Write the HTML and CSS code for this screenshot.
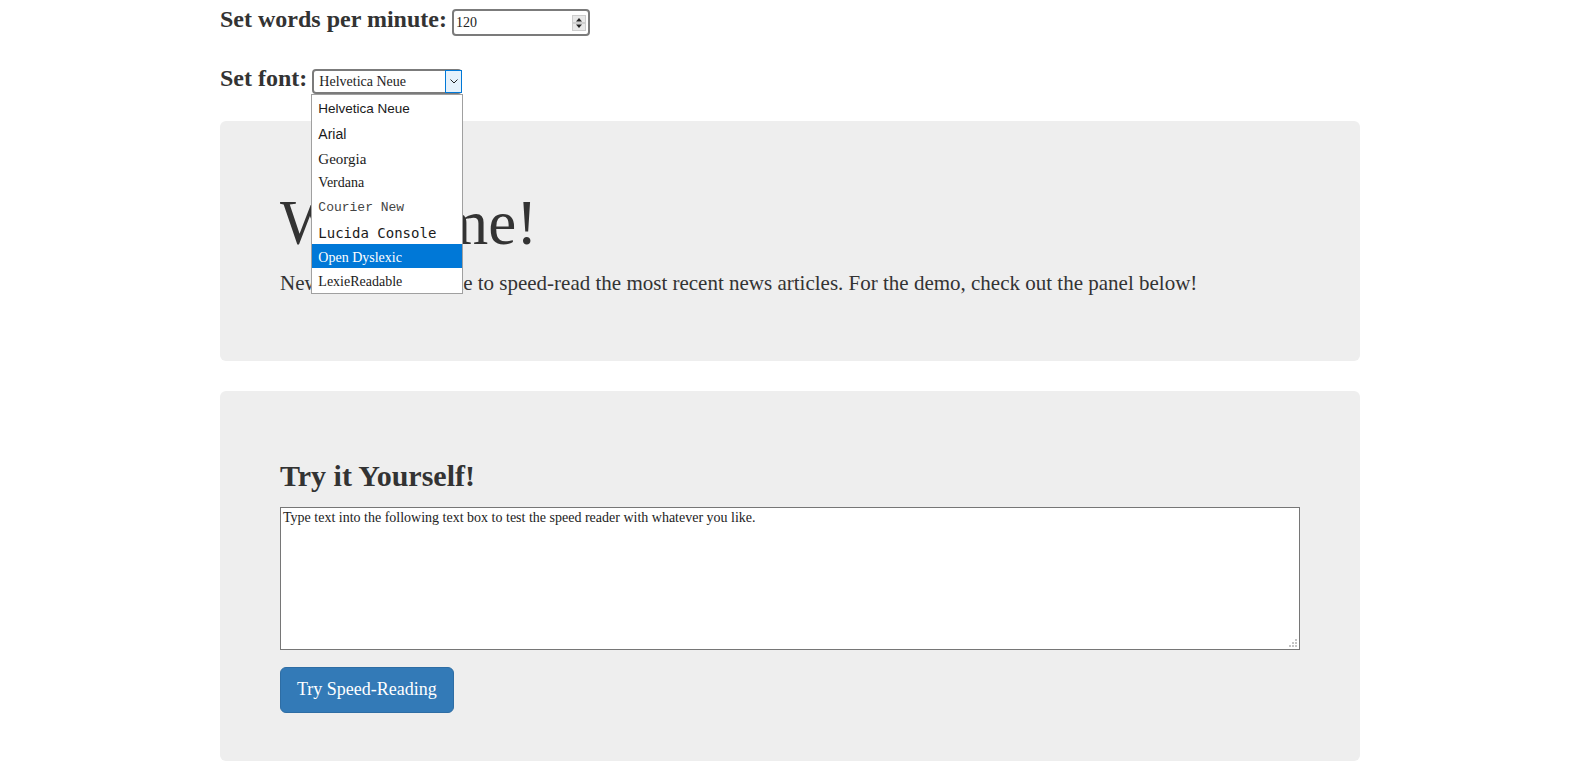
FILE: index.html
```html
<!DOCTYPE html>
<html lang="en">
<head>
<meta charset="utf-8">
<title>Speed Reader</title>
<link rel="stylesheet" href="styles.css">
</head>
<body>
<div class="container">
  <div class="setting-row setting-wpm">
    <label class="setting-label" for="wpm">Set words per minute:</label>
    <div class="num-field">
      <input class="num-input" id="wpm" type="text" value="120">
      <span class="spinner">
        <svg width="14" height="16" viewBox="0 0 14 16">
          <rect x="0.5" y="0.5" width="13" height="15" fill="#e8e8e8" stroke="#cdcdcd"/>
          <line x1="1" y1="8" x2="13" y2="8" stroke="#b5b5b5"/>
          <path d="M4 6.5h6L7 3z" fill="#222"/>
          <path d="M4 9.5h6L7 13z" fill="#222"/>
        </svg>
      </span>
    </div>
  </div>
  <div class="setting-row setting-font">
    <span class="setting-label">Set font:</span>
    <div class="select-box">
      <span class="select-value">Helvetica Neue</span>
      <span class="select-arrow">
        <svg width="8" height="5" viewBox="0 0 8 5"><polyline points="0.5,0.5 4,4 7.5,0.5" fill="none" stroke="#222" stroke-width="1"/></svg>
      </span>
      <ul class="select-menu">
        <li class="opt opt-helv">Helvetica Neue</li>
        <li class="opt opt-arial">Arial</li>
        <li class="opt opt-georgia">Georgia</li>
        <li class="opt opt-verdana">Verdana</li>
        <li class="opt opt-courier">Courier New</li>
        <li class="opt opt-lucida">Lucida Console</li>
        <li class="opt opt-serif opt-active">Open Dyslexic</li>
        <li class="opt opt-serif">LexieReadable</li>
      </ul>
    </div>
  </div>

  <div class="jumbotron">
    <h1 class="jumbo-title">Welcome!</h1>
    <p class="jumbo-text">News Hub is a website to speed-read the most recent news articles. For the demo, check out the panel below!</p>
  </div>

  <div class="jumbotron">
    <h2 class="try-title">Try it Yourself!</h2>
    <div class="text-wrap">
      <textarea class="try-text">Type text into the following text box to test the speed reader with whatever you like.</textarea>
      <span class="grip">
        <svg width="8" height="8" viewBox="0 0 8 8">
          <rect x="6" y="0" width="2" height="2" fill="#c4c4c4"/>
          <rect x="3" y="3" width="2" height="2" fill="#c4c4c4"/>
          <rect x="6" y="3" width="2" height="2" fill="#c4c4c4"/>
          <rect x="0" y="6" width="2" height="2" fill="#c4c4c4"/>
          <rect x="3" y="6" width="2" height="2" fill="#c4c4c4"/>
          <rect x="6" y="6" width="2" height="2" fill="#c4c4c4"/>
        </svg>
      </span>
    </div>
    <button class="btn-primary" type="button">Try Speed-Reading</button>
  </div>
</div>
</body>
</html>
```

FILE: styles.css
```css
* {
  box-sizing: border-box;
}

html, body {
  margin: 0;
  padding: 0;
  background: #fff;
}

body {
  font-family: "Liberation Serif", "Times New Roman", serif;
  font-size: 14px;
  line-height: 1.42857;
  color: #333;
}

.container {
  width: 1140px;
  margin: 0 auto;
  padding-top: 6px;
}

.setting-row {
  display: flex;
  align-items: baseline;
}

.setting-font {
  margin-top: 29px;
  margin-bottom: 27px;
}

.setting-label {
  font-size: 24px;
  line-height: 27px;
  font-weight: bold;
  color: #333;
}

.num-field {
  display: inline-flex;
  align-items: center;
  width: 138px;
  height: 27px;
  margin-left: 5px;
  border: 2px solid #7b7b7b;
  border-radius: 4px;
  background: #fff;
  padding: 0 2px 0 2px;
}

.num-input {
  flex: 1;
  min-width: 0;
  height: 23px;
  border: 0;
  padding: 0;
  margin: 0;
  outline: none;
  background: transparent;
  font-family: "Liberation Serif", serif;
  font-size: 14px;
  line-height: 23px;
  color: #222;
}

.spinner {
  display: flex;
  width: 14px;
  height: 16px;
}

.select-box {
  position: relative;
  display: inline-flex;
  align-items: center;
  width: 150px;
  height: 25px;
  margin-left: 5px;
  border: 2px solid #7b7b7b;
  border-radius: 4px;
  background: #fff;
}

.select-value {
  flex: 1;
  padding-left: 5px;
  font-size: 14px;
  line-height: 21px;
  color: #222;
  white-space: nowrap;
}

.select-arrow {
  display: flex;
  align-items: center;
  justify-content: center;
  align-self: stretch;
  width: 17px;
  margin: -1px -2px -1px 0;
  border: 1px solid #0078d7;
  background: #e5f1fb;
}

.select-menu {
  position: absolute;
  z-index: 5;
  top: calc(100% + 2px);
  left: -3px;
  width: 152px;
  margin: 0;
  padding: 0;
  list-style: none;
  background: #fff;
  border: 1px solid #a0a0a0;
}

.opt {
  height: 24.75px;
  line-height: 24.75px;
  padding: 2px 0 0 6px;
  color: #1a1a1a;
  font-family: "Liberation Serif", serif;
  font-size: 14px;
  white-space: nowrap;
}

.opt-helv {
  font-family: "Liberation Sans", Arial, sans-serif;
  font-size: 13.5px;
}

.opt-arial {
  font-family: "Liberation Sans", Arial, sans-serif;
  font-size: 14px;
}

.opt-georgia {
  font-size: 15px;
}

.opt-courier {
  font-family: "Liberation Mono", monospace;
  font-size: 13px;
  color: #444;
}

.opt-lucida {
  font-family: "DejaVu Sans Mono", monospace;
  font-size: 14px;
}

.opt-active {
  background: #0078d7;
  color: #fff;
}

.jumbotron {
  padding: 48px 60px;
  margin-bottom: 30px;
  background: #eee;
  border-radius: 6px;
}

.jumbo-title {
  margin: 20px 0 10px;
  font-size: 63px;
  line-height: 1.1;
  font-weight: normal;
  color: #333;
}

.jumbo-text {
  margin: 0 0 15px;
  font-size: 21px;
  line-height: 30px;
}

.try-title {
  margin: 20px 0 15px;
  font-size: 30px;
  line-height: 1.1;
  font-weight: bold;
  color: #333;
}

.text-wrap {
  position: relative;
}

.try-text {
  display: block;
  width: 100%;
  height: 143px;
  margin: 0;
  padding: 2px;
  border: 1px solid #767676;
  background: #fff;
  font-family: "Liberation Serif", serif;
  font-size: 14px;
  line-height: normal;
  color: #222;
  resize: none;
}

.grip {
  position: absolute;
  right: 3px;
  bottom: 3px;
  display: flex;
  width: 8px;
  height: 8px;
}

.btn-primary {
  display: inline-block;
  margin-top: 17px;
  padding: 10px 16px;
  font-family: "Liberation Serif", serif;
  font-size: 18px;
  line-height: 1.3333;
  color: #fff;
  background: #337ab7;
  border: 1px solid #2e6da4;
  border-radius: 6px;
  cursor: pointer;
}
```
